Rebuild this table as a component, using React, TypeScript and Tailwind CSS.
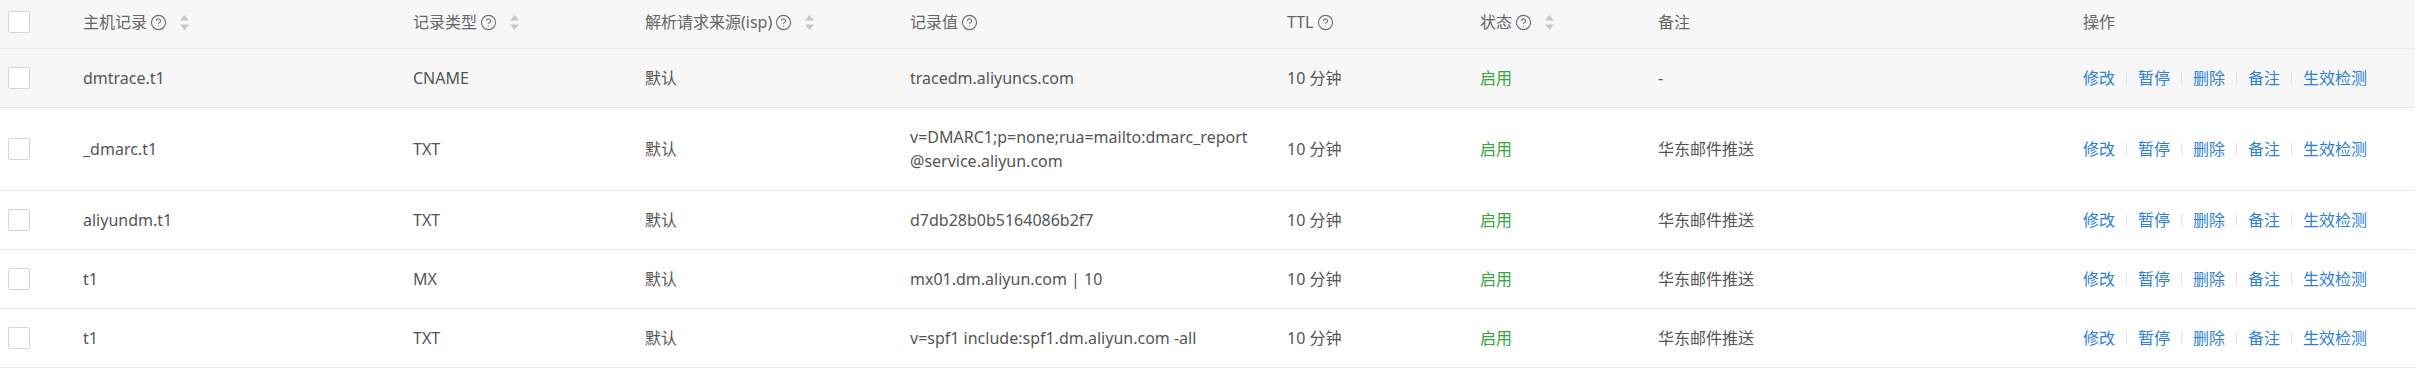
import React from "react";

const COLS = "grid grid-cols-[67px_330px_232px_265px_377px_193px_178px_425px_1fr]";

function Help() {
  return (
    <svg width="17" height="17" viewBox="0 0 24 24" fill="none" stroke="#6f6f6f" strokeWidth="1.6" strokeLinecap="round" strokeLinejoin="round" className="ml-[3px] shrink-0">
      <circle cx="12" cy="12" r="10" />
      <path d="M9.09 9a3 3 0 0 1 5.83 1c0 2-3 3-3 3" />
      <path d="M12 17h.01" />
    </svg>
  );
}

function Sort() {
  return (
    <svg width="9" height="15" viewBox="0 0 9 15" className="ml-[13px] shrink-0">
      <polygon points="4.5,0 9,5.5 0,5.5" fill="#c8c8c8" />
      <polygon points="0,9.5 9,9.5 4.5,15" fill="#c8c8c8" />
    </svg>
  );
}

function Box() {
  return <div className="w-[22px] h-[22px] border border-[#d6d6d6] bg-white rounded-[2px]" />;
}

type Row = {
  host: string;
  type: string;
  value: React.ReactNode;
  note: string;
  bg?: string;
};

const rows: Row[] = [
  { host: "dmtrace.t1", type: "CNAME", value: "tracedm.aliyuncs.com", note: "-", bg: "bg-[#f7f7f7]" },
  {
    host: "_dmarc.t1",
    type: "TXT",
    value: (
      <>
        v=DMARC1;p=none;rua=mailto:dmarc_report
        <br />
        @service.aliyun.com
      </>
    ),
    note: "华东邮件推送",
  },
  { host: "aliyundm.t1", type: "TXT", value: "d7db28b0b5164086b2f7", note: "华东邮件推送" },
  { host: "t1", type: "MX", value: "mx01.dm.aliyun.com | 10", note: "华东邮件推送" },
  { host: "t1", type: "TXT", value: "v=spf1 include:spf1.dm.aliyun.com -all", note: "华东邮件推送" },
];

const actions = ["修改", "暂停", "删除", "备注", "生效检测"];

export default function App() {
  return (
    <div
      className="w-[2415px] h-[381px] bg-white text-[16px] leading-6 text-[#555]"
      style={{ fontFamily: '"Noto Sans", "Noto Sans CJK SC", sans-serif' }}
    >
      <div className={`${COLS} items-center bg-[#f7f7f7] border-b border-[#e6e9ee] pt-[10px] pb-[14px] text-[#666]`}>
        <div className="pl-2"><Box /></div>
        <div className="pl-4 flex items-center">主机记录<Help /><Sort /></div>
        <div className="pl-4 flex items-center">记录类型<Help /><Sort /></div>
        <div className="pl-4 flex items-center">解析请求来源(isp)<Help /><Sort /></div>
        <div className="pl-4 flex items-center">记录值<Help /></div>
        <div className="pl-4 flex items-center">TTL<Help /></div>
        <div className="pl-4 flex items-center">状态<Help /><Sort /></div>
        <div className="pl-4">备注</div>
        <div className="pl-4">操作</div>
        <div />
      </div>
      {rows.map((r, i) => (
        <div key={i} className={`${COLS} items-center border-b border-[#e6e9ee] py-[17px] ${r.bg ?? "bg-white"}`}>
          <div className="pl-2"><Box /></div>
          <div className="pl-4">{r.host}</div>
          <div className="pl-4">{r.type}</div>
          <div className="pl-4">默认</div>
          <div className="pl-4">{r.value}</div>
          <div className="pl-4">10 分钟</div>
          <div className="pl-4 text-[#36a53f]">启用</div>
          <div className="pl-4">{r.note}</div>
          <div className="pl-4 flex items-center text-[#2f7fd5]">
            {actions.map((a, j) => (
              <React.Fragment key={a}>
                {j > 0 && <span className="mx-[11px] w-px h-[12px] bg-[#e2e2e2]" />}
                <span>{a}</span>
              </React.Fragment>
            ))}
          </div>
          <div />
        </div>
      ))}
    </div>
  );
}
